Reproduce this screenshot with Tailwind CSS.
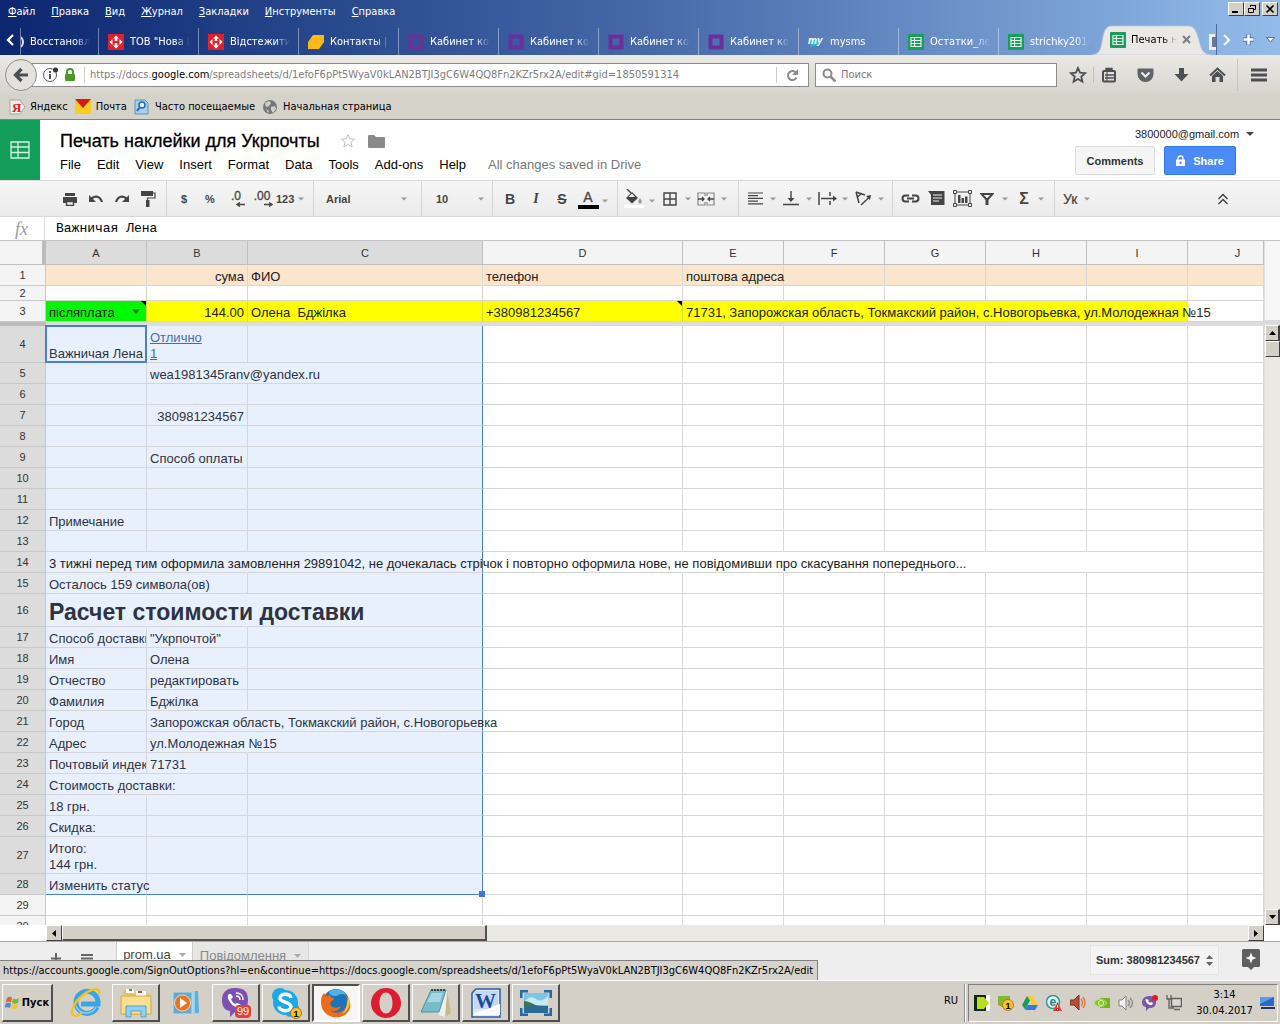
<!DOCTYPE html>
<html lang="ru">
<head>
    <meta charset="UTF-8">
    <meta name="viewport" content="width=device-width, initial-scale=1.0">
    <title>Печать наклейки для Укрпочты</title>
    <script src="https://cdn.jsdelivr.net/npm/@tailwindcss/browser@4"></script>
</head>
<body class="h-screen overflow-hidden flex flex-col bg-[#d4d0c8] text-black font-['Tahoma','DejaVu_Sans_Condensed','Noto_Sans',sans-serif] text-[11px] leading-4">

    <!-- shared icons -->
    <svg class="hidden">
        <symbol id="sheet" viewBox="0 0 16 16">
            <rect width="16" height="16" rx="1" fill="#1a9c5b"/>
            <path d="M3 3.5h10v9H3zM3 6.5h10M3 9.5h10M6.5 3.5v9" fill="none" stroke="#e4f6ec" stroke-width="1.2"/>
        </symbol>
        <symbol id="poshta" viewBox="0 0 16 16">
            <rect width="16" height="16" fill="#e0202c"/>
            <path d="M8 1.5l3 3H9.300v2.500H6.700V4.500H5zM8 14.500l3-3H9.300V9H6.700v2.500H5zM1.500 8l3-3v6zM14.500 8l-3-3v6z" fill="#fff"/>
        </symbol>
        <symbol id="cabinet" viewBox="0 0 16 16">
            <rect x="2.500" y="2.500" width="11" height="11" fill="none" stroke="#68309a" stroke-width="4"/>
        </symbol>
        <symbol id="arrow" viewBox="0 0 6 4"><path d="M0 .5h6L3 3.500z" fill="#999"/></symbol>
    </svg>

    <!-- browser window top -->
    <header class="relative shrink-0 h-[55px] flex flex-col bg-linear-to-r from-[#0c2670] via-[#4668a8] to-[#94bcea] text-white">
        <div class="h-6 flex items-center justify-between pl-2">
            <nav class="flex gap-4">
                <a href="#"><u>Ф</u>айл</a>
                <a href="#"><u>П</u>равка</a>
                <a href="#"><u>В</u>ид</a>
                <a href="#"><u>Ж</u>урнал</a>
                <a href="#"><u>З</u>акладки</a>
                <a href="#"><u>И</u>нструменты</a>
                <a href="#"><u>С</u>правка</a>
            </nav>
            <div class="flex pr-[2px] -mt-[6px]">
                <button aria-label="Свернуть" class="w-4 h-[14px] bg-[#d4d0c8] border border-t-white border-l-white border-r-[#404040] border-b-[#404040] grid place-items-center"><svg width="10" height="10"><path d="M1 8h6" stroke="#000" stroke-width="2"/></svg></button>
                <button aria-label="Восстановить" class="w-4 h-[14px] bg-[#d4d0c8] border border-t-white border-l-white border-r-[#404040] border-b-[#404040] grid place-items-center"><svg width="10" height="10" fill="none" stroke="#000"><path d="M3.500 3V1.500h5v4H7M3 1.500h6M1.500 4.500h5v4h-5zM1 4.500h6" /></svg></button>
                <button aria-label="Закрыть" class="ml-[2px] w-4 h-[14px] bg-[#d4d0c8] border border-t-white border-l-white border-r-[#404040] border-b-[#404040] grid place-items-center"><svg width="10" height="10"><path d="M1.500 1.500l7 7M8.500 1.500l-7 7" stroke="#000" stroke-width="1.600"/></svg></button>
            </div>
        </div>
        <div class="flex-1 flex items-stretch min-w-0">
            <button aria-label="Назад по вкладкам" class="w-5 grid place-items-center"><svg width="10" height="12"><path d="M8 1L3 6l5 5" fill="none" stroke="#fff" stroke-width="2.200"/></svg></button>
            <div id="tabs" class="flex flex-1 min-w-0 mt-1"></div>
            <div class="relative w-[106px] shrink-0 -mt-px text-black">
                <svg class="absolute -left-[6px] bottom-0" width="120" height="30" viewBox="0 0 120 30"><path d="M0 30C9 29 9 22 11 12C13 3 15 1 21 1H95C101 1 103 3 106 12C109 22 109 29 119 30z" fill="#e9e8e4" stroke="#bcc8dc" stroke-width=".8"/></svg>
                <div class="relative flex items-center gap-[5px] h-full pl-3 pt-px">
                    <svg class="w-4 h-4 shrink-0"><use href="#sheet"/></svg>
                    <span class="w-[46px] overflow-hidden whitespace-nowrap [mask-image:linear-gradient(to_right,#000_70%,transparent)]">Печать наклейки</span>
                    <button aria-label="Закрыть вкладку"><svg width="9" height="9"><path d="M1 1l7 7M8 1L1 8" stroke="#808080" stroke-width="2.200"/></svg></button>
                </div>
            </div>
            <div class="w-3 shrink-0 flex items-center justify-end pt-1"><svg width="7" height="16"><path d="M0 0h6v3H3v10h4v3H0z" fill="#eee"/><path d="M3 3h4v10H3z" fill="#667799"/></svg></div>
            <div class="flex items-center justify-between pl-[6px] pr-[5px] w-[64px] shrink-0 border-l border-[#4a6aa0]">
                <button aria-label="Вперёд по вкладкам"><svg width="8" height="12"><path d="M1 1l5 5-5 5" fill="none" stroke="#fff" stroke-width="2"/></svg></button>
                <button aria-label="Новая вкладка"><svg width="13" height="13"><path d="M6.500 1v11M1 6.500h11" stroke="#5878ac" stroke-width="4.500"/><path d="M6.500 1.500v10M1.500 6.500h10" stroke="#fff" stroke-width="2.500"/></svg></button>
                <button aria-label="Все вкладки"><svg width="9" height="6"><path d="M.5 .5h8l-4 4.500z" fill="#fff" stroke="#5878ac"/></svg></button>
            </div>
        </div>
    </header>

    <!-- address bar -->
    <div class="shrink-0 h-[38px] flex items-center pl-[5px] pt-[2px] bg-linear-to-b from-[#eae9e5] to-[#d8d5ce]">
        <button aria-label="Назад" class="relative z-10 w-8 h-8 shrink-0 rounded-full border border-[#909090] bg-[#e4e2de] grid place-items-center">
            <svg width="16" height="16"><path d="M15 8H4M8.500 2L2.500 8l6 6" fill="none" stroke="#4c4f54" stroke-width="3.200"/></svg>
        </button>
        <div class="-ml-2 flex-1 flex items-center h-6 bg-white border border-[#8c8c88] pl-3">
            <svg class="shrink-0" width="18" height="18"><circle cx="8" cy="9" r="6.500" fill="none" stroke="#555"/><path d="M8 8v5M8 5v2" stroke="#444" stroke-width="1.800"/><circle cx="13.500" cy="4" r="2.500" fill="#333"/></svg>
            <svg class="shrink-0 ml-1" width="12" height="14"><path d="M3 7V4a3 3 0 0 1 6 0v3" fill="none" stroke="#4a9a2a" stroke-width="2"/><rect x="1" y="6" width="10" height="7" rx="1" fill="#4a9a2a"/></svg>
            <span class="w-px h-4 bg-[#ccc] ml-2 mr-[5px]"></span>
            <span class="flex-1 text-[#7c7c7c] whitespace-nowrap">https://docs.<span class="text-black">google.com</span>/spreadsheets/d/1efoF6pPt5WyaV0kLAN2BTJI3gC6W4QQ8Fn2KZr5rx2A/edit#gid=1850591314</span>
            <button aria-label="Обновить" class="w-8 h-4 border-l border-[#ccc] grid place-items-center"><svg width="13" height="13"><path d="M10.500 8.500A4.500 4.500 0 1 1 9.500 3.200" fill="none" stroke="#8a8a8a" stroke-width="2"/><path d="M12 0v6H6z" fill="#8a8a8a"/></svg></button>
        </div>
        <label class="ml-[6px] w-[242px] flex items-center gap-[5px] h-6 bg-white border border-[#8c8c88] pl-[6px]">
            <svg width="14" height="14"><circle cx="5.500" cy="5.500" r="4" fill="none" stroke="#8a8a8a" stroke-width="2"/><path d="M8.500 8.500l5 5" stroke="#8a8a8a" stroke-width="2.500"/></svg>
            <input type="search" aria-label="Поиск" placeholder="Поиск" class="flex-1 min-w-0 outline-none placeholder:text-[#777]">
        </label>
        <button aria-label="В закладки" class="ml-3 w-[18px] grid place-items-center"><svg width="18" height="18"><path d="M9 2l2.100 4.700 5 .5-3.800 3.400 1.100 5L9 13l-4.400 2.600 1.100-5L1.900 7.200l5-.5z" fill="none" stroke="#4c4f54" stroke-width="1.800"/></svg></button>
        <span class="ml-[6px] w-px h-4 bg-[#c4c0b4]"></span>
        <button aria-label="Список закладок" class="ml-[7px]"><svg width="16" height="16"><rect x="2" y="4" width="12" height="10.500" rx="1" fill="none" stroke="#4c4f54" stroke-width="2"/><path d="M5 1.500h6v2.500H5zM4 8h9M4 11h9" fill="#4c4f54" stroke="#4c4f54" stroke-width="1.400"/><path d="M6 5v9" stroke="#4c4f54"/></svg></button>
        <button aria-label="Pocket" class="ml-5"><svg width="17" height="16"><path d="M1.500 1.500h14a1 1 0 0 1 1 1V7a8 8 0 0 1-16 0V2.500a1 1 0 0 1 1-1z" fill="#5f6368"/><path d="M4.500 5.500l4 4 4-4" fill="none" stroke="#eee" stroke-width="2"/></svg></button>
        <button aria-label="Загрузки" class="ml-5"><svg width="15" height="16"><path d="M5 1h5v6h4.500l-7 7.500L.5 7H5z" fill="#4c4f54"/></svg></button>
        <button aria-label="Домой" class="ml-5"><svg width="17" height="16"><path d="M1 8.500L8.500 1.500 16 8.500" fill="none" stroke="#4c4f54" stroke-width="2"/><path d="M3 9l5.500-5L14 9v6h-3.500v-5h-4v5H3z" fill="#4c4f54"/></svg></button>
        <span class="ml-[11px] w-px h-8 bg-[#c8c4bc]"></span>
        <button aria-label="Меню" class="ml-[13px] mr-[13px]"><svg width="16" height="14"><path d="M0 2h16M0 7h16M0 12h16" stroke="#4c4f54" stroke-width="3"/></svg></button>
    </div>

    <!-- bookmarks -->
    <nav class="shrink-0 h-[27px] flex items-center pl-[9px] pt-[2px] gap-[7px] border-b border-[#858078] bg-[#d5d2ca]">
        <a href="#" class="flex items-center gap-[5px]"><svg width="16" height="16"><path d="M1 1h10l5 7-5 7H1z" fill="#eee" stroke="#a8a49c"/><text x="3" y="13" font-size="13" fill="#e02020" font-weight="bold" font-family="Liberation Serif">Я</text></svg>Яндекс</a>
        <a href="#" class="flex items-center gap-[5px]"><svg width="16" height="16"><path d="M0 0h16v15H0z" fill="#fccc20"/><path d="M0 0h16L8 9z" fill="#d81818"/></svg>Почта</a>
        <a href="#" class="flex items-center gap-[5px]"><svg width="16" height="16"><path d="M1 1h10l3 3v11H1z" fill="#a8d0ee" stroke="#5a90c0"/><circle cx="8" cy="6" r="3" fill="#e4f2fc" stroke="#2868a8" stroke-width="1.500"/><path d="M6 8l-3 4" stroke="#2868a8" stroke-width="2"/></svg>Часто посещаемые</a>
        <a href="#" class="flex items-center gap-[5px]"><svg width="16" height="16"><circle cx="8" cy="8" r="7" fill="#77777a"/><path d="M3 4l4-2 2 2-2 3-3 1zM9 8l4-1 1 3-3 4-2-3zM4 10l3 2-1 2z" fill="#d0d0cc"/></svg>Начальная страница</a>
    </nav>

    <!-- document header -->
    <div class="shrink-0 h-[60px] flex bg-white font-['Liberation_Sans',Arial,sans-serif] text-[13px]">
        <a href="#" aria-label="Google Sheets" class="w-10 bg-[#129e5a] grid place-items-center"><svg width="20" height="18"><path d="M1 1h18v16H1zM1 6h18M1 11.500h18M8 1v16" fill="none" stroke="#d4f4e2" stroke-width="1.300"/></svg></a>
        <div class="flex-1 pl-5 pt-[9px]">
            <div class="flex items-center h-6">
                <h1 class="text-lg leading-6 [-webkit-text-stroke:0.3px_#000]">Печать наклейки для Укрпочты</h1>
                <button aria-label="Star" class="ml-5"><svg width="16" height="16"><path d="M8 1.500l1.900 4.300 4.600.5-3.500 3 1 4.600L8 11.500l-4 2.400 1-4.600-3.500-3 4.600-.5z" fill="none" stroke="#c4c4c4"/></svg></button>
                <button aria-label="Folder" class="ml-3"><svg width="17" height="14"><path d="M0 2a1 1 0 0 1 1-1h5l2 2h8a1 1 0 0 1 1 1v9a1 1 0 0 1-1 1H1a1 1 0 0 1-1-1z" fill="#8a8a8a"/></svg></button>
            </div>
            <nav class="flex gap-4 mt-1 leading-4">
                <a href="#">File</a><a href="#">Edit</a><a href="#">View</a><a href="#">Insert</a><a href="#">Format</a><a href="#">Data</a><a href="#">Tools</a><a href="#">Add-ons</a><a href="#">Help</a>
                <span class="ml-[6px] text-[#777]">All changes saved in Drive</span>
            </nav>
        </div>
        <div class="w-[205px] pt-[6px] text-[11px]">
            <button class="flex items-center ml-[60px] gap-[7px] leading-4 text-[#222] whitespace-nowrap">3800000@gmail.com<svg width="8" height="4"><path d="M0 0h8L4 4z" fill="#444"/></svg></button>
            <div class="flex gap-[9px] mt-1 font-bold leading-4">
                <button class="w-20 h-[29px] rounded-xs border border-[#dcdcdc] bg-[#f5f5f5] text-[#333]">Comments</button>
                <button class="w-[72px] h-[29px] rounded-xs border border-[#3079ed] bg-[#4a8bf5] text-white flex items-center justify-center gap-2"><svg width="9" height="12"><path d="M2 5V3.500a2.500 2.500 0 0 1 5 0V5" fill="none" stroke="#fff" stroke-width="1.300"/><path d="M0 4.500h9V11H0z" fill="#fff"/><circle cx="4.500" cy="7.800" r="1.200" fill="#4a8bf5"/></svg>Share</button>
            </div>
        </div>
    </div>

    <!-- sheet toolbar -->
    <div class="shrink-0 h-9 flex items-stretch border-t border-[#d8d8d8] bg-linear-to-b from-[#f6f6f6] to-[#ebebeb] font-['Liberation_Sans',Arial,sans-serif] text-[11px] font-bold text-[#444] [&>div]:flex [&>div]:items-center [&>div]:border-r [&>div]:border-[#d4d4d4] [&_button]:flex [&_button]:items-center [&_button]:justify-center">
        <div class="w-[167px] pl-[57px]">
            <button aria-label="Print" class="w-[26px]"><svg width="16" height="14" fill="#444"><path d="M3 1h10v3H3z"/><path d="M1 5h13a1 1 0 0 1 1 1v5h-3V9H4v2H1V6z"/><path d="M4.500 9.500h7v4h-7z" fill="#f0f0f0" stroke="#444" stroke-width="1.400"/></svg></button>
            <button aria-label="Undo" class="w-[26px]"><svg width="16" height="12"><path d="M3 6c4-4 9-3 11 3" fill="none" stroke="#444" stroke-width="2.200"/><path d="M1 2v7h7z" fill="#444"/></svg></button>
            <button aria-label="Redo" class="w-[26px]"><svg width="16" height="12"><path d="M13 6C9 2 4 3 2 9" fill="none" stroke="#444" stroke-width="2.200"/><path d="M15 2v7H8z" fill="#444"/></svg></button>
            <button aria-label="Paint format" class="w-[26px]"><svg width="16" height="18"><path d="M1 1h12v5H1z" fill="#444"/><path d="M13 3h2v5H7.500v3" fill="none" stroke="#444" stroke-width="1.200"/><path d="M6 10h3.500v7H6z" fill="#444"/></svg></button>
        </div>
        <div class="w-[147px] pl-1">
            <button class="w-[26px]">$</button>
            <button class="w-[26px]">%</button>
            <button class="w-[26px] flex-col leading-3 text-xs font-normal [-webkit-text-stroke:0.3px_#444]">.0<svg class="ml-2" width="9" height="5"><path d="M9 2.500H2M4 .5l-3 2 3 2" fill="none" stroke="#444" stroke-width="1.400"/></svg></button>
            <button class="w-[26px] flex-col leading-3 text-xs font-normal [-webkit-text-stroke:0.3px_#444]">.00<svg class="ml-3" width="9" height="5"><path d="M0 2.500h7M5 .5l3 2-3 2" fill="none" stroke="#444" stroke-width="1.400"/></svg></button>
            <button class="gap-1 ml-px">123<svg width="6" height="4"><use href="#arrow"/></svg></button>
        </div>
        <div class="w-[108px]"><button class="flex-1 pl-3 pr-[14px] !justify-between">Arial<svg width="6" height="4"><use href="#arrow"/></svg></button></div>
        <div class="w-[71px]"><button class="flex-1 pl-[14px] pr-2 !justify-between">10<svg width="6" height="4"><use href="#arrow"/></svg></button></div>
        <div class="w-[125px] pl-1">
            <button aria-label="Bold" class="w-[26px] text-sm">B</button>
            <button aria-label="Italic" class="w-[26px] text-sm italic font-['Liberation_Serif',serif]">I</button>
            <button aria-label="Strikethrough" class="w-[26px] text-sm line-through">S</button>
            <button aria-label="Text color" class="w-[26px] flex-col text-sm leading-4 font-normal [-webkit-text-stroke:0.3px_#444]">A<span class="w-[21px] h-1 bg-black"></span></button>
            <svg class="ml-px mt-1" width="6" height="4"><use href="#arrow"/></svg>
        </div>
        <div class="w-[121px] pl-1">
            <button aria-label="Fill color" class="w-6 flex-col"><svg width="20" height="20"><path d="M3 0l4 4" stroke="#444" stroke-width="1.400"/><path d="M8 3l6 6-6 5.500L2 9z" fill="#444"/><path d="M8 4.500l3 3.500H4.500z" fill="#eee"/><path d="M16 9c3 4 1 5.500 0 5.500S13 13 16 9z" fill="#999"/><path d="M0 16h20v3H0z" fill="#fff"/></svg></button>
            <span class="w-3 grid place-items-center"><svg class="mt-1" width="6" height="4"><use href="#arrow"/></svg></span>
            <button aria-label="Borders" class="w-6"><svg width="14" height="14"><path d="M1 1h12v12H1zM7 1v12M1 7h12" fill="none" stroke="#444" stroke-width="1.400"/></svg></button>
            <span class="w-3 grid place-items-center"><svg width="6" height="4"><use href="#arrow"/></svg></span>
            <button aria-label="Merge" class="w-6"><svg width="18" height="14"><path d="M8 4V1H1v12h7v-3M10 4V1h7v12h-7v-3" fill="none" stroke="#888" stroke-width="1.200"/><path d="M1 7h6M5 5l2 2-2 2M17 7h-6M13 5l-2 2 2 2" fill="none" stroke="#444" stroke-width="1.300"/></svg></button>
            <span class="w-3 grid place-items-center"><svg width="6" height="4"><use href="#arrow"/></svg></span>
        </div>
        <div class="w-[154px] pl-1">
            <button aria-label="Horizontal align" class="w-6"><svg width="15" height="13"><path d="M0 1h15M0 3.700h10M0 6.400h15M0 9.100h10M0 11.800h15" stroke="#444" stroke-width="1.200"/></svg></button>
            <span class="w-3 grid place-items-center"><svg width="6" height="4"><use href="#arrow"/></svg></span>
            <button aria-label="Vertical align" class="w-6"><svg width="16" height="15"><path d="M8 0v9M0 13.500h16" stroke="#444" stroke-width="1.400"/><path d="M4.500 7h7L8 11z" fill="#444"/></svg></button>
            <span class="w-3 grid place-items-center"><svg width="6" height="4"><use href="#arrow"/></svg></span>
            <button aria-label="Text wrapping" class="w-6"><svg width="19" height="15"><path d="M1 1v13M12 1v4M12 10v4M3 7.500h13" stroke="#444" stroke-width="1.500"/><path d="M15 4.500l4 3-4 3z" fill="#444"/></svg></button>
            <span class="w-3 grid place-items-center"><svg width="6" height="4"><use href="#arrow"/></svg></span>
            <button aria-label="Text rotation" class="w-6"><svg width="17" height="15"><path d="M1 1l3 11M1 1l9 3M2.500 6l4-3.500M6 14l8-7.500" fill="none" stroke="#444" stroke-width="1.500"/><path d="M11 5l5-1-1 5z" fill="#444"/></svg></button>
            <span class="w-3 grid place-items-center"><svg width="6" height="4"><use href="#arrow"/></svg></span>
        </div>
        <div class="w-[162px] pl-1">
            <button aria-label="Link" class="w-[26px]"><svg width="19" height="9"><path d="M8 1.500H4.500a3 3 0 0 0 0 6H8M11 1.500h3.500a3 3 0 0 1 0 6H11M6 4.500h7" fill="none" stroke="#444" stroke-width="2"/></svg></button>
            <button aria-label="Comment" class="w-[26px]"><svg width="17" height="15"><path d="M0 0h16.500v14H3V4z" fill="#444"/><path d="M5 4h9M5 7h9M5 10h6" stroke="#eee" stroke-width="1.200"/></svg></button>
            <button aria-label="Chart" class="w-[26px]"><svg width="19" height="17"><path d="M2 2h15v13H2z" fill="none" stroke="#444"/><path d="M5 5h2.500v8H5zM8.500 8H11v5H8.500zM12 6.500h2.500V13H12z" fill="#444"/><path d="M.5 .5h3v3h-3zM15.500 .5h3v3h-3zM.5 13.500h3v3h-3zM15.500 13.500h3v3h-3z" fill="#eee" stroke="#444"/></svg></button>
            <button aria-label="Filter" class="w-6"><svg width="14" height="12"><path d="M1.500 1h11L7.500 6.500V12h-1V6.500z" fill="none" stroke="#444" stroke-width="2"/></svg></button>
            <span class="w-3 grid place-items-center"><svg width="6" height="4"><use href="#arrow"/></svg></span>
            <button aria-label="Functions" class="w-[26px] text-base">Σ</button>
            <span class="w-2 grid place-items-center"><svg width="6" height="4"><use href="#arrow"/></svg></span>
        </div>
        <button class="ml-2 gap-[7px] text-sm font-normal [-webkit-text-stroke:0.2px_#444]">Ук<svg width="6" height="4"><use href="#arrow"/></svg></button>
        <button aria-label="Collapse" class="ml-auto mr-[51px]"><svg width="12" height="12"><path d="M1.500 6L6 1.500 10.500 6M1.500 11L6 6.500l4.500 4.500" fill="none" stroke="#444" stroke-width="1.500"/></svg></button>
    </div>

    <!-- formula bar -->
    <div class="shrink-0 h-6 flex items-center border-t border-[#d8d8d8] bg-white">
        <label for="formula" class="w-[45px] pl-[15px] text-lg italic text-[#999] border-r border-[#ddd] font-['Liberation_Serif',serif]">fx</label>
        <input id="formula" value="Важничая Лена" class="flex-1 ml-[11px] outline-none text-[13px] font-['Liberation_Mono','Courier_New',monospace]">
    </div>

    <!-- grid -->
    <main class="relative flex-1 min-h-0 flex bg-[#f7f7f7] border-t border-[#c4c4c4] font-['Liberation_Sans',Arial,sans-serif] text-[13px]">
        <div class="flex-1 min-w-0 overflow-hidden bg-white">
            <table class="w-full table-fixed border-separate border-spacing-0 whitespace-nowrap">
                <colgroup>
                    <col class="w-[46px]"><col class="w-[101px]"><col class="w-[101px]"><col class="w-[235px]"><col class="w-[200px]"><col class="w-[101px]"><col class="w-[101px]"><col class="w-[101px]"><col class="w-[101px]"><col class="w-[101px]"><col>
                </colgroup>
                <thead id="heads"></thead>
                <tbody id="cells"></tbody>
            </table>
        </div>
        <div class="w-4 shrink-0 flex flex-col pt-[84px] border-l border-[#e0e0e0]">
            <div class="h-[5px] -mt-[5px] bg-[#dcdcdc]"></div>
            <div class="flex-1 flex flex-col bg-[#ebe9e4]">
                <button aria-label="Вверх" class="h-4 grid place-items-center bg-[#d4d0c8] border border-t-white border-l-white border-r-2 border-r-[#404040] border-b-[#404040]"><svg width="7" height="4"><path d="M0 4h7L3.500 0z"/></svg></button>
                <div class="h-4 bg-[#d4d0c8] border border-t-white border-l-white border-r-[#404040] border-b-[#404040]"></div>
                <button aria-label="Вниз" class="mt-auto h-4 grid place-items-center bg-[#d4d0c8] border border-t-white border-l-white border-r-2 border-r-[#404040] border-b-[#404040]"><svg width="7" height="4"><path d="M0 0h7L3.500 4z"/></svg></button>
            </div>
        </div>
    </main>

    <!-- horizontal scrollbar -->
    <div class="shrink-0 h-[17px] flex pl-[46px] pr-4 border-b border-[#a8a8a8] bg-white">
        <button aria-label="Влево" class="w-4 grid place-items-center bg-[#d4d0c8] border border-t-white border-l-white border-r-[#404040] border-b-[#404040]"><svg width="4" height="7"><path d="M4 0v7L0 3.500z"/></svg></button>
        <div class="w-[425px] bg-[#d4d0c8] border border-t-white border-l-white border-r-2 border-r-[#505050] border-b-2 border-b-[#505050]"></div>
        <div class="flex-1 bg-[#ebe9e4]"></div>
        <button aria-label="Вправо" class="w-4 grid place-items-center bg-[#d4d0c8] border border-t-white border-l-white border-r-[#404040] border-b-[#404040]"><svg width="4" height="7"><path d="M0 0v7L4 3.500z"/></svg></button>
    </div>

    <!-- sheet tabs -->
    <footer class="relative shrink-0 h-[38px] flex bg-[#eee] font-['Liberation_Sans',Arial,sans-serif] text-[13px] text-[#444]">
        <button aria-label="Add sheet" class="ml-[50px] mt-2 w-3 h-4"><svg width="12" height="14"><path d="M6 2v11M1 7.500h10" stroke="#666" stroke-width="2"/></svg></button>
        <button aria-label="All sheets" class="ml-[19px] mt-2 w-3 h-4"><svg width="12" height="14"><path d="M0 4h12M0 7.500h12M0 11h12" stroke="#666" stroke-width="2"/></svg></button>
        <button class="ml-[23px] w-[77px] h-8 pb-[6px] bg-white border-x border-[#ccc] flex items-center justify-center gap-2">prom.ua<svg width="7" height="4"><path d="M0 0h7L3.500 4z" fill="#aaa"/></svg></button>
        <button class="w-[116px] h-8 pb-[5px] bg-[#e6e6e6] border-r border-[#d4d4d4] flex items-center justify-center gap-2 text-[#888]">Повідомлення<svg width="7" height="4"><path d="M0 0h7L3.500 4z" fill="#aaa"/></svg></button>
        <button class="ml-auto mt-[3px] w-[129px] h-[30px] bg-[#f4f4f4] border border-[#e4e4e4] flex items-center justify-center gap-[6px] text-[11px] font-bold text-[#333]">Sum: 380981234567<svg width="7" height="11"><path d="M0 4h7L3.500 0zM0 7h7l-3.500 4z" fill="#666"/></svg></button>
        <button aria-label="Explore" class="ml-[23px] mr-5 -mt-1"><svg width="18" height="21"><path d="M1.500 0h15A1.500 1.500 0 0 1 18 1.500v15a1.500 1.500 0 0 1-1.500 1.500H12l-3 3-3-3H1.500A1.500 1.500 0 0 1 0 16.500v-15A1.500 1.500 0 0 1 1.500 0z" fill="#5f5f5f"/><path d="M9 3.500l1.500 4L14.500 9l-4 1.500L9 14.500l-1.500-4L3.500 9l4-1.500z" fill="#fff"/></svg></button>
        <div class="absolute left-0 bottom-0 h-5 flex items-center pl-[3px] pr-1 border-t border-r border-[#808080] bg-[#d6d3cc] text-black text-[11px] whitespace-nowrap font-['Tahoma','DejaVu_Sans_Condensed','Noto_Sans',sans-serif]">https://accounts.google.com/SignOutOptions?hl=en&amp;continue=https://docs.google.com/spreadsheets/d/1efoF6pPt5WyaV0kLAN2BTJI3gC6W4QQ8Fn2KZr5rx2A/edit</div>
    </footer>

    <!-- taskbar -->
    <div class="shrink-0 h-11 flex items-stretch gap-[2px] pl-[2px] pt-[3px] pb-[2px] border-t border-white bg-[#d4d0c8]">
        <button class="w-[51px] mr-[7px] flex items-center justify-center gap-px font-bold border border-t-white border-l-white border-r-2 border-r-[#505050] border-b-2 border-b-[#505050]">
            <svg width="16" height="16"><path d="M2 3c2-2 4-1 5 0L6 7.500c-2-1-4-1-5.500 0z" fill="#e8602c"/><path d="M8 3.500c2 1 4 1 6 0L13 8c-2 1-4 1-6 0z" fill="#7ab83c"/><path d="M.5 8.500c2-1 4-1 5.500 0L5 13c-2-1-4-1-5.500 0z" fill="#4a90d8"/><path d="M7 9c2 1 4 1 6 0l-1 4.500c-2 1-4 1-6 0z" fill="#f4c430"/></svg>Пуск</button>
        <button aria-label="Internet Explorer" class="w-12 grid place-items-center"><svg width="32" height="32" viewBox="0 0 32 32"><path d="M27 20a11 11 0 1 1 1-5v2H11" fill="none" stroke="#3aa4e4" stroke-width="5"/><path d="M26 20a11 11 0 0 1-20-1" fill="none" stroke="#8cd4f8" stroke-width="1.500"/><path d="M29 7C31 0 22 1 13 8C4 15 0 25 3 28c2 2 6 0 9-2" fill="none" stroke="#f0c420" stroke-width="2.400"/></svg></button>
        <button aria-label="Проводник" class="w-12 grid place-items-center border border-t-white border-l-white border-r-2 border-r-[#505050] border-b-2 border-b-[#505050]"><svg width="32" height="30" viewBox="0 0 32 30"><path d="M3 2h10l2 3h14v22H3z" fill="#e8c468"/><path d="M6 1h8v4H6zM16 3h10v5H16z" fill="#fff"/><path d="M9 1h3v2H9z" fill="#40a050"/><path d="M18 3h4v2h-4z" fill="#d84030"/><path d="M1 8h30v18H1z" fill="#f8e090" stroke="#d0a848"/><path d="M6 29V18h20v11h-5v-6H11v6z" fill="#90d0f0" stroke="#58a0d0"/></svg></button>
        <button aria-label="Media Player" class="w-12 grid place-items-center"><svg width="28" height="28" viewBox="0 0 28 28"><path d="M9 2h17l1 22-16 1z" fill="#5cb0e0"/><path d="M5 2h18v23H5z" fill="#9cd4f0"/><path d="M1 3h19v22H1z" fill="#68a8d0" stroke="#b8def0"/><circle cx="10.500" cy="14" r="8" fill="#ec7420" stroke="#fbd8b0"/><path d="M8 9l7 5-7 5z" fill="#fff"/></svg></button>
        <button aria-label="Viber" class="w-12 grid place-items-center border border-t-white border-l-white border-r-2 border-r-[#505050] border-b-2 border-b-[#505050]"><svg width="32" height="32" viewBox="0 0 32 32"><path d="M15 1c10 0 13 4 13 12s-4 12-13 12l-5 5v-6C4 23 2 19 2 13S5 1 15 1z" fill="#7d50b4"/><path d="M9 7c-4 3 3 13 9 14 3-1 3-3 2-4l-3-1-2 1c-2-1-3-3-4-5l2-2-2-3z" fill="#fff"/><path d="M16 6c5 0 7 3 7 7M16 9c3 0 4 2 4 4" fill="none" stroke="#fff" stroke-width="1.400"/><rect x="15" y="18" width="16" height="13" rx="4" fill="#e83c38"/><text x="17" y="28" font-size="11" fill="#fff" font-family="Liberation Sans">99</text></svg></button>
        <button aria-label="Skype" class="w-12 grid place-items-center border border-t-white border-l-white border-r-2 border-r-[#505050] border-b-2 border-b-[#505050]"><svg width="32" height="32" viewBox="0 0 32 32"><circle cx="10" cy="9" r="8" fill="#1ca8e8"/><circle cx="21" cy="22" r="8" fill="#1ca8e8"/><circle cx="15.500" cy="15.500" r="12.500" fill="#1ca8e8"/><path d="M21 11c-1-5-11-5-11 0 0 5 11 3 11 9 0 5-11 5-12-.5" fill="none" stroke="#fff" stroke-width="3.400"/><circle cx="26" cy="26" r="5.500" fill="#fcc030" stroke="#a87810"/><text x="23.500" y="29.500" font-size="9" font-weight="bold" font-family="Liberation Sans">1</text></svg></button>
        <button aria-label="Firefox" class="w-12 grid place-items-center bg-[#f6f5f3] border-2 border-t-[#505050] border-l-[#505050] border-r-white border-b-white"><svg width="32" height="32" viewBox="0 0 32 32"><circle cx="16" cy="15" r="13" fill="#1c74b8"/><path d="M9 5c5-4 14-3 17 3-4-2-7-1-9 1-4 0-7 0-8-4z" fill="#4cb4e4"/><path d="M4 6l2 3 4-1c0 2 1 3 4 3 0 3-4 3-4 6 2 5 8 4 11 2-1 5-8 6-11 4 6 6 18 2 17-9 0-3-1-5-2-6 6 4 7 12 3 17-7 9-22 6-26-4C0 15 1 9 4 6z" fill="#ec6c1c"/><path d="M29 10c2 6 0 14-7 17 3-3 5-7 5-12z" fill="#fcc42c"/></svg></button>
        <button aria-label="Opera" class="w-12 grid place-items-center border border-t-white border-l-white border-r-2 border-r-[#505050] border-b-2 border-b-[#505050]"><svg width="32" height="32" viewBox="0 0 32 32"><path fill-rule="evenodd" d="M16 1a15 15 0 1 0 0 30a15 15 0 1 0 0-30zM16 5.500c4 0 6.500 4.500 6.500 10.500S20 26.500 16 26.500 9.500 22 9.500 16 12 5.500 16 5.500z" fill="#dc1c30"/></svg></button>
        <button aria-label="Блокнот" class="w-12 grid place-items-center border border-t-white border-l-white border-r-2 border-r-[#505050] border-b-2 border-b-[#505050]"><svg width="32" height="30" viewBox="0 0 32 30"><path d="M27 3l4 22-6 4z" fill="#c8b888"/><path d="M11 3h16l-2 26-6-2z" fill="#eef0ec"/><path d="M11 2h15l-7 22H1z" fill="#78bcc8" stroke="#4c94a4"/><path d="M12 5h11l-3 9H7z" fill="#a4d8e0"/><path d="M11 2h15" stroke="#444" stroke-width="2" stroke-dasharray="2 1"/></svg></button>
        <button aria-label="Word" class="w-12 grid place-items-center border border-t-white border-l-white border-r-2 border-r-[#505050] border-b-2 border-b-[#505050]"><svg width="30" height="30" viewBox="0 0 30 30"><path d="M5 1h24v28H1V5z" fill="#dce8f8" stroke="#2c5ca8" stroke-width="1.500"/><path d="M5 3h22v18H3V5z" fill="#c4d8f0"/><text x="4" y="20" font-size="21" font-weight="bold" fill="#1c4c9c" font-family="Liberation Serif">W</text><path d="M3 25l17-5v7H3zM20 19l9-3v11h-9z" fill="#fff"/></svg></button>
        <button aria-label="Снимок" class="w-12 grid place-items-center border border-t-white border-l-white border-r-2 border-r-[#505050] border-b-2 border-b-[#505050]"><svg width="32" height="26" viewBox="0 0 32 26"><path d="M4 3h24v20H4z" fill="#7cc4ec"/><path d="M6 10q5-5 10-1t12-3v9H4z" fill="#c8e8f4"/><path d="M4 12c8 1 10 4 18 4h6v7H4z" fill="#2c6c94"/><path d="M4 11c4 0 9 3 14 5H4z" fill="#3c7840"/><path d="M1 8V1h7M24 1h7v7M31 18v7h-7M8 25H1v-7" fill="none" stroke="#2468a8" stroke-width="3"/></svg></button>

        <div class="ml-auto flex items-center pr-1 mb-1">RU</div>
        <div class="w-[2px] border-l border-[#909090] bg-white"></div>
        <div class="w-[310px] mr-[2px] flex items-center pl-[5px] border border-t-[#808080] border-l-[#808080] border-r-white border-b-white [&>svg]:mr-2 [&>svg]:shrink-0">
            <svg width="16" height="16"><path d="M0 0h16v16H0z" fill="#fff"/><path d="M0 0h12v16H0z" fill="#102810"/><path d="M3 2h7l5 6-5 6H3z" fill="#b8e020"/></svg>
            <svg width="16" height="16"><path d="M0 1h12v9L6 13 0 10z" fill="#80b830"/><circle cx="10" cy="10" r="5.500" fill="#fcc030" stroke="#b88010"/><text x="7.500" y="13.500" font-size="9" font-weight="bold" font-family="Liberation Sans">1</text></svg>
            <svg width="16" height="16"><path d="M5 1h5.500L16 10h-5z" fill="#fccc34"/><path d="M5 1l3 4.500-5 9L0 10z" fill="#1c9c5c"/><path d="M5.500 10H16l-3 5H3z" fill="#3878e0"/></svg>
            <svg width="16" height="16"><circle cx="7" cy="7" r="6.500" fill="#e8f6f6" stroke="#289ca4" stroke-width="1.500"/><text x="3.500" y="11" font-size="12" font-weight="bold" fill="#18848c" font-family="Liberation Sans">e</text><path d="M11.500 7l4.500 9H7z" fill="#e03c38"/><path d="M11.500 10v3M11.500 14v1" stroke="#fff"/></svg>
            <svg width="16" height="16"><path d="M0 5h4l5-5v15l-5-5H0z" fill="#b85030" stroke="#783018"/><path d="M11 4q3 4 0 7M13 2q4 6 0 11" fill="none" stroke="#e07848" stroke-width="1.400"/></svg>
            <svg width="16" height="16"><path d="M6 3h10v10H6z" fill="#74b41c"/><path d="M0 8c3-5 9-5 13 0-4 5-10 5-13 0z" fill="#84c424" stroke="#b8e080"/><circle cx="7" cy="8" r="2.500" fill="none" stroke="#e0f4c0"/></svg>
            <svg width="16" height="16"><path d="M1 5h3l4-4v14l-4-4H1z" fill="#f4f4f4" stroke="#808080"/><path d="M10 5q3 3 0 6M12 3q5 5 0 10" fill="none" stroke="#888" stroke-width="1.300"/></svg>
            <svg width="16" height="16"><path d="M7 1c5 0 7 2 7 6s-2 6-7 6l-3 3v-4C1 12 0 9 0 7s2-6 7-6z" fill="#7858a8"/><path d="M4 4c-2 2 3 7 6 6l1-2-2-1-1 1-2-2 1-1z" fill="#fff"/><circle cx="13" cy="3" r="3" fill="#e01828"/></svg>
            <svg width="16" height="16"><path d="M5.500 3.500h10v8h-10zM8 14.500h6" fill="#d8d8d4" stroke="#606060" stroke-width="1.500"/><path d="M1 0v4h4V0M3 4v9h5" fill="none" stroke="#606060" stroke-width="1.300"/></svg>
            <time class="flex-1 text-center leading-4 whitespace-nowrap">3:14<br>30.04.2017</time>
            <svg class="!mr-[2px]" width="16" height="14"><path d="M1 1h14v9H1z" fill="#2868c8"/><path d="M1 1h14L1 8z" fill="#5c9ce8"/><path d="M2 12h14" stroke="#203860" stroke-width="2"/></svg>
        </div>
    </div>

    <script>
        // browser tabs
        const tabs = [
            ['', 'Восстановление'],
            ['poshta', 'ТОВ "Нова Пошта'],
            ['poshta', 'Відстежити'],
            ['contacts', 'Контакты | Укр'],
            ['cabinet', 'Кабинет компан'],
            ['cabinet', 'Кабинет компан'],
            ['cabinet', 'Кабинет компан'],
            ['cabinet', 'Кабинет компан'],
            ['my', 'mysms'],
            ['sheet', 'Остатки_ленты'],
            ['sheet', 'strichky2016'],
        ];
        const tabIcons = {
            contacts: '<svg class="w-4 h-4 shrink-0"><path d="M5 1h11v7l-5 7H0V8z" fill="#fcb814"/></svg>',
            my: '<svg class="w-4 h-4 shrink-0"><path d="M2 5h11l-2 7-3-1-5 2z" fill="#20c0d8"/><text x="0" y="10" font-size="10" font-weight="bold" font-style="italic" fill="#fff" font-family="Liberation Sans">my</text></svg>',
        };
        document.getElementById('tabs').innerHTML = tabs.map(([icon, text], i) => {
            if (!i) {
                return `<a href="#" class="w-[79px] shrink-0 flex items-center gap-[6px] border-l border-r border-white/40 overflow-hidden"><svg class="shrink-0" width="3" height="16"><path d="M0 3q4 5 0 10" fill="none" stroke="#ddd" stroke-width="2"/></svg><span class="w-[60px] overflow-hidden whitespace-nowrap [mask-image:linear-gradient(to_right,#000_75%,transparent)]">${text}</span></a>`;
            }
            const svg = tabIcons[icon] || `<svg class="w-4 h-4 shrink-0"><use href="#${icon}"/></svg>`;
            const edge = i < 10 ? 'border-r border-white/40' : '';
            return `<a href="#" class="flex-1 min-w-0 flex items-center gap-[6px] pl-[9px] ${edge}">${svg}<span class="w-[60px] overflow-hidden whitespace-nowrap [mask-image:linear-gradient(to_right,#000_75%,transparent)]">${text}</span></a>`;
        }).join('');

        // column letters, A-C are inside the selection
        document.getElementById('heads').innerHTML = '<tr class="h-6 text-[11px] text-[#333]"><th class="bg-[#f4f4f4] border-b border-[#c0c0c0] border-r-4 border-r-[#bcbcbc]"></th>' +
            [...'ABCDEFGHIJ'].map((c, i) => `<th class="font-normal border-b border-r border-[#c0c0c0] ${i < 3 ? 'bg-[#dcdcdc]' : 'bg-[#f4f4f4]'} ${c === 'J' ? 'pl-6' : ''}">${c}</th>`).join('') + '</tr>';

        // row number -> texts of columns A, B, C...
        const sheet = {
            1: ['', 'сума', 'ФИО', 'телефон', 'поштова адреса'],
            3: ['післяплата', '144.00', 'Олена&nbsp; Бджілка', '+380981234567', '71731, Запорожская область, Токмакский район, с.Новогорьевка, ул.Молодежная №15'],
            4: ['Важничая Лена', '<a href="#" class="underline text-[#3c70b0]">Отлично<br>1</a>'],
            5: ['', 'wea1981345ranv@yandex.ru'],
            7: ['', '380981234567'],
            9: ['', 'Способ оплаты'],
            12: ['Примечание'],
            14: ['3 тижні перед тим оформила замовлення 29891042, не дочекалась стрічок і повторно оформила нове, не повідомивши про скасування попереднього...'],
            15: ['Осталось 159 символа(ов)'],
            16: ['<b class="text-[23px] leading-7">Расчет стоимости доставки</b>'],
            17: ['Способ доставки', '"Укрпочтой"'],
            18: ['Имя', 'Олена'],
            19: ['Отчество', 'редактировать'],
            20: ['Фамилия', 'Бджілка'],
            21: ['Город', 'Запорожская область, Токмакский район, с.Новогорьевка'],
            22: ['Адрес', 'ул.Молодежная №15'],
            23: ['Почтовый индекс', '71731'],
            24: ['Стоимость доставки:'],
            25: ['18 грн.'],
            26: ['Скидка:'],
            27: ['Итого:<br>144 грн.'],
            28: ['Изменить статус'],
        };
        // how many column edges the text of a row runs across, from which column
        const spill = { 3: [4, 5], 5: [1, 1], 14: [0, 8], 15: [0, 1], 16: [0, 2], 21: [1, 1], 22: [1, 1], 24: [0, 1] };
        const heights = { 2: 'h-[15px]', 4: 'h-[37px]', 16: 'h-[33px]', 27: 'h-[37px]' };

        let html = '';
        for (let r = 1; r <= 30; r++) {
            const picked = r >= 4 && r <= 28;
            html += `<tr class="${heights[r] || 'h-[21px]'} leading-4">`;
            html += `<th class="font-normal text-[11px] text-[#333] p-0 border-b border-r border-[#c8c8c8] ${picked ? 'bg-[#dcdcdc]' : 'bg-[#f4f4f4]'}">${r === 2 ? '<div class="h-3 leading-3">2</div>' : r}</th>`;
            for (let c = 0; c < 10; c++) {
                const text = (sheet[r] && sheet[r][c]) || '';
                let bg = 'bg-white';
                if (r === 1) bg = 'bg-[#fce5cd]';
                if (r === 3 && c < 9) bg = c ? 'bg-[#ffff00]' : 'bg-[#00f800]';
                if (picked && c < 3) bg = 'bg-[#e9f0fd]';
                let side = picked && c < 3 ? 'border-r-[#d0d6e2]' : 'border-r-[#d8d8d8]';
                if (r === 3 && c < 9) side = 'border-r-[#d8d840]';
                if (spill[r] && c >= spill[r][0] && c < spill[r][0] + spill[r][1]) side = 'border-r-transparent';
                if (picked && c === 2) side = 'border-r-[#4a80c8]';
                let bottom = 'border-b-[#d4d6da]';
                if (r === 28 && c < 3) bottom = 'border-b-[#4a80c8]';
                const right = c === 1 && (r === 1 || r === 3 || r === 7) ? 'text-right' : 'text-left';
                const clip = c === 0 && (r === 17 || r === 23) ? 'overflow-hidden' : '';
                const color = picked && c < 2 && r !== 14 ? 'text-[#2c3444]' : 'text-[#222]';
                let extra = '';
                if (r === 3 && (c === 0 || c === 3)) extra += '<svg class="absolute right-0 top-0" width="5" height="5"><path d="M0 0h5v5z"/></svg>';
                if (r === 3 && c === 0) extra += '<svg class="absolute right-[6px] top-2" width="8" height="5"><path d="M0 0h8L4 5z" fill="#108010"/></svg>';
                if (r === 4 && c === 0) extra += '<span class="absolute -left-px -top-px -right-px -bottom-px border-2 border-[#4a80c8]"></span>';
                if (r === 28 && c === 2) extra += '<span class="absolute -right-[3px] -bottom-[3px] w-[6px] h-[6px] bg-[#3f78d8]"></span>';
                html += `<td class="p-0 px-[3px] border-b border-r align-bottom ${extra ? 'relative' : ''} ${bg} ${side} ${bottom} ${right} ${clip} ${color}">${r === 2 ? '' : text}${extra}</td>`;
            }
            html += '</tr>';
            if (r === 3) {
                html += '<tr class="h-1"><td class="p-0 bg-[#bcbcbc]"></td><td colspan="10" class="p-0 bg-[#dcdcdc]"></td></tr>';
            }
        }
        document.getElementById('cells').innerHTML = html;
    </script>
</body>
</html>
